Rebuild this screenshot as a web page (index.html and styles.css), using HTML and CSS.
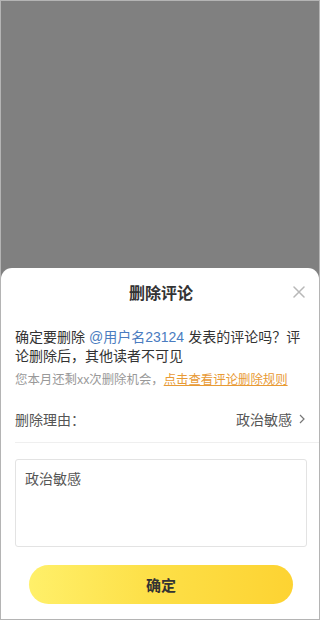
FILE: index.html
```html
<!DOCTYPE html>
<html lang="zh-CN">
<head>
  <meta charset="UTF-8">
  <meta name="viewport" content="width=device-width, initial-scale=1.0">
  <title>删除评论</title>
  <link rel="stylesheet" href="styles.css">
</head>
<body>
  <div class="screen">
    <div class="sheet">
      <div class="sheet-header">
        <h2>删除评论</h2>
        <button class="close" aria-label="关闭">
          <svg width="12" height="12" viewBox="0 0 12 12">
            <path d="M1 1L11 11M11 1L1 11" stroke="#b8b8b8" stroke-width="1.5" stroke-linecap="round" fill="none"/>
          </svg>
        </button>
      </div>

      <p class="message">确定要删除<span class="user">@用户名23124</span>发表的评论吗？评论删除后，其他读者不可见</p>
      <p class="quota">您本月还剩xx次删除机会，<a href="#" class="rules">点击查看评论删除规则</a></p>

      <div class="reason-row">
        <span class="label">删除理由：</span>
        <span class="value">政治敏感
          <svg width="6" height="10" viewBox="0 0 6 10">
            <path d="M1 1L5 5L1 9" stroke="#777" stroke-width="1.2" fill="none"/>
          </svg>
        </span>
      </div>

      <textarea class="reason-text">政治敏感</textarea>

      <button class="confirm">确定</button>
    </div>
  </div>
</body>
</html>
```

FILE: styles.css
```css
* {
  box-sizing: border-box;
}

body {
  margin: 0;
  font-family: "Liberation Sans", "Noto Sans CJK SC", sans-serif;
  color: #333;
}

.screen {
  height: 620px;
  border: 1px solid #b4b4b4;
  background-color: #808080;
  display: flex;
  flex-direction: column;
  justify-content: flex-end;
}

.sheet {
  height: 351px;
  background: #fff;
  border-radius: 11px 11px 0 0;
  padding: 0 12px 0 14px;
  display: flex;
  flex-direction: column;
}

.sheet-header {
  position: relative;
  height: 48px;
  display: flex;
  align-items: center;
  justify-content: center;
}

.sheet-header h2 {
  margin: 0;
  font-size: 16px;
  font-weight: 600;
  color: #333;
}

.close {
  position: absolute;
  right: 2px;
  top: 18px;
  padding: 0;
  border: none;
  background: none;
  line-height: 0;
}

.message {
  margin: 12px 0 0;
  font-size: 14px;
  line-height: 19px;
  color: #333;
}

.user {
  display: inline-block;
  margin: 0 4px;
  color: #4a7cc0;
}

.quota {
  margin: 6px 0 0;
  font-size: 12.4px;
  line-height: 17px;
  color: #999;
  white-space: nowrap;
}

.rules {
  color: #e89a35;
  text-decoration: underline;
}

.reason-row {
  margin: 7px -12px 0 0;
  padding-right: 14px;
  height: 47px;
  border-bottom: 1px solid #efefef;
  display: flex;
  align-items: center;
  justify-content: space-between;
  font-size: 14px;
  color: #555;
}

.value {
  display: flex;
  align-items: center;
  gap: 7px;
}

.reason-text {
  margin-top: 16px;
  width: 100%;
  height: 88px;
  padding: 9px 9px;
  border: 1px solid #e3e3e3;
  border-radius: 3px;
  font-family: inherit;
  font-size: 14px;
  line-height: 20px;
  color: #555;
  resize: none;
}

.confirm {
  margin: 18px auto 0;
  width: 264px;
  height: 39px;
  border: none;
  border-radius: 20px;
  background: linear-gradient(to right, #fff06a, #fde048 45%, #fdd332);
  font-family: inherit;
  font-size: 15px;
  font-weight: 700;
  color: #333;
}
```
